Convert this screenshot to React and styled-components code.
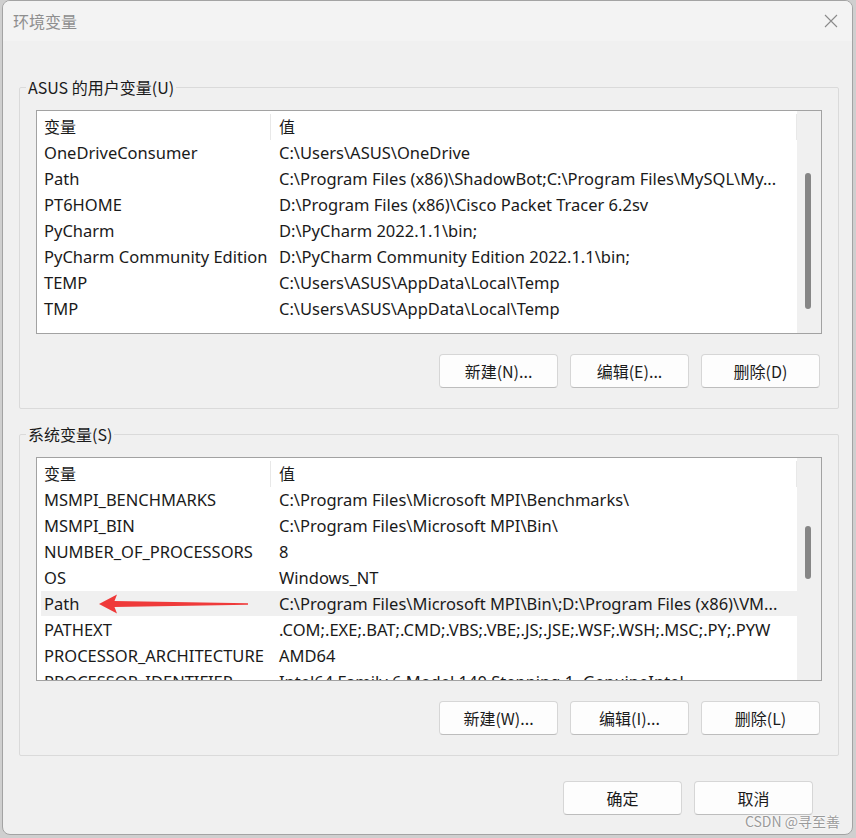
import styled, { createGlobalStyle } from "styled-components";

const GlobalStyle = createGlobalStyle`
  html, body {
    margin: 0;
    padding: 0;
    background: #cfcfcf;
  }
  * {
    box-sizing: border-box;
  }
`;

const userVars = [
  ["OneDriveConsumer", "C:\\Users\\ASUS\\OneDrive"],
  ["Path", "C:\\Program Files (x86)\\ShadowBot;C:\\Program Files\\MySQL\\My..."],
  ["PT6HOME", "D:\\Program Files (x86)\\Cisco Packet Tracer 6.2sv"],
  ["PyCharm", "D:\\PyCharm 2022.1.1\\bin;"],
  ["PyCharm Community Edition", "D:\\PyCharm Community Edition 2022.1.1\\bin;"],
  ["TEMP", "C:\\Users\\ASUS\\AppData\\Local\\Temp"],
  ["TMP", "C:\\Users\\ASUS\\AppData\\Local\\Temp"],
];

const sysVars = [
  ["MSMPI_BENCHMARKS", "C:\\Program Files\\Microsoft MPI\\Benchmarks\\"],
  ["MSMPI_BIN", "C:\\Program Files\\Microsoft MPI\\Bin\\"],
  ["NUMBER_OF_PROCESSORS", "8"],
  ["OS", "Windows_NT"],
  ["Path", "C:\\Program Files\\Microsoft MPI\\Bin\\;D:\\Program Files (x86)\\VM...", true],
  ["PATHEXT", ".COM;.EXE;.BAT;.CMD;.VBS;.VBE;.JS;.JSE;.WSF;.WSH;.MSC;.PY;.PYW"],
  ["PROCESSOR_ARCHITECTURE", "AMD64"],
  ["PROCESSOR_IDENTIFIER", "Intel64 Family 6 Model 140 Stepping 1, GenuineIntel"],
];

const Window = styled.div`
  position: relative;
  margin: 0 3px 0 2px;
  height: 835px;
  background: #f0f0f0;
  border: 1px solid #a3a3a3;
  border-radius: 8px;
  overflow: hidden;
  font-family: "Noto Sans", "Noto Sans CJK SC", sans-serif;
  color: #1a1a1a;
`;

const TitleBar = styled.div`
  height: 40px;
  display: flex;
  align-items: center;
  justify-content: space-between;
  padding: 0 14px 0 10px;
  background: #f3f3f3;
  font-family: "Noto Sans CJK SC", sans-serif;
  font-size: 16px;
  color: #8e8e8e;
`;

const Body = styled.div`
  padding: 0 13px 0 16px;
`;

const Group = styled.fieldset`
  margin: ${({ $top }) => $top}px 0 0;
  padding: 0 16px 20px;
  border: 1px solid #dadada;
  border-radius: 2px;
  min-width: 0;
`;

const Legend = styled.legend`
  margin-left: -10px;
  padding: 0 2px;
  font-family: "Noto Sans CJK SC", sans-serif;
  font-size: 16px;
  line-height: 20px;
  color: #1a1a1a;
`;

const ListBox = styled.div`
  margin-top: 13px;
  height: 224px;
  border: 1px solid #a2a2a2;
  background: #fff;
  display: flex;
  overflow: hidden;
`;

const Rows = styled.div`
  flex: 1;
  min-width: 0;
  font-size: 16.5px;
`;

const HeaderRow = styled.div`
  height: 29px;
  display: grid;
  grid-template-columns: 234px 1fr;
  font-family: "Noto Sans CJK SC", sans-serif;
  font-size: 16px;
`;

const HeaderCell = styled.div`
  display: flex;
  align-items: center;
  padding: 0 0 3px ${({ $first }) => ($first ? 7 : 8)}px;
  border-right: 1px solid #e8e8e8;
  height: 26px;
  margin-top: 3px;
`;

const Row = styled.div`
  position: relative;
  isolation: isolate;
  height: 25.9px;
  display: grid;
  grid-template-columns: 234px 1fr;
  align-items: center;

  &::before {
    content: "";
    position: absolute;
    inset: 0 0 0 4px;
    z-index: -1;
    background: ${({ $sel }) => ($sel ? "#f0f0f0" : "transparent")};
  }
`;

const Cell = styled.div`
  padding-left: ${({ $first }) => ($first ? 7 : 8)}px;
  white-space: nowrap;
  overflow: hidden;
  line-height: 25px;
`;

const Track = styled.div`
  width: 24px;
  background: #f0f0f0;
  padding-left: 8px;
`;

const Thumb = styled.div`
  width: 6px;
  border-radius: 3px;
  background: #868686;
`;

const ButtonRow = styled.div`
  display: flex;
  justify-content: flex-end;
  gap: 12px;
  margin-top: 20px;
  padding-right: 2px;
`;

const Button = styled.button`
  width: 119px;
  height: 34px;
  background: #fdfdfd;
  border: 1px solid #d6d6d6;
  border-bottom-color: #bdbdbd;
  border-radius: 4px;
  font-family: "Noto Sans CJK SC", sans-serif;
  font-size: 16px;
  color: #1b1b1b;
  padding: 0;
`;

const Footer = styled(ButtonRow)`
  margin-top: 25px;
  padding-right: 39px;
`;

const Arrow = styled.svg`
  position: absolute;
  left: 62px;
  top: 3px;
`;

const Watermark = styled.div`
  position: absolute;
  right: 12px;
  bottom: 3px;
  font-family: "Noto Sans CJK SC", sans-serif;
  font-size: 14px;
  color: #9a9a9a;
  text-shadow: 0 0 2px #fff, 0 0 2px #fff;
`;

const CloseIcon = () => (
  <svg width="14" height="14" viewBox="0 0 14 14">
    <path d="M1 1 L13 13 M13 1 L1 13" stroke="#8a8a8a" strokeWidth="1.1" />
  </svg>
);

const VarList = ({ rows, thumbTop, thumbHeight }) => (
  <ListBox>
    <Rows>
      <HeaderRow>
        <HeaderCell $first>变量</HeaderCell>
        <HeaderCell>值</HeaderCell>
      </HeaderRow>
      {rows.map(([name, value, sel]) => (
        <Row key={name + value} $sel={sel}>
          <Cell $first>{name}</Cell>
          <Cell>{value}</Cell>
          {sel && (
            <Arrow width="150" height="20" viewBox="0 0 150 20">
              <path
                d="M0 10 L18 0.5 L15.5 7 L149 9.3 L149 10.7 L15.5 13 L18 19.5 Z"
                fill="#ef3a3a"
              />
            </Arrow>
          )}
        </Row>
      ))}
    </Rows>
    <Track>
      <Thumb style={{ marginTop: thumbTop, height: thumbHeight }} />
    </Track>
  </ListBox>
);

export default function App() {
  return (
    <>
      <GlobalStyle />
      <Window>
        <TitleBar>
          <span>环境变量</span>
          <CloseIcon />
        </TitleBar>
        <Body>
          <Group $top={36}>
            <Legend>ASUS 的用户变量(U)</Legend>
            <VarList rows={userVars} thumbTop={62} thumbHeight={136} />
            <ButtonRow>
              <Button>新建(N)...</Button>
              <Button>编辑(E)...</Button>
              <Button>删除(D)</Button>
            </ButtonRow>
          </Group>
          <Group $top={15}>
            <Legend>系统变量(S)</Legend>
            <VarList rows={sysVars} thumbTop={68} thumbHeight={53} />
            <ButtonRow>
              <Button>新建(W)...</Button>
              <Button>编辑(I)...</Button>
              <Button>删除(L)</Button>
            </ButtonRow>
          </Group>
        </Body>
        <Footer>
          <Button>确定</Button>
          <Button>取消</Button>
        </Footer>
        <Watermark>CSDN @寻至善</Watermark>
      </Window>
    </>
  );
}
